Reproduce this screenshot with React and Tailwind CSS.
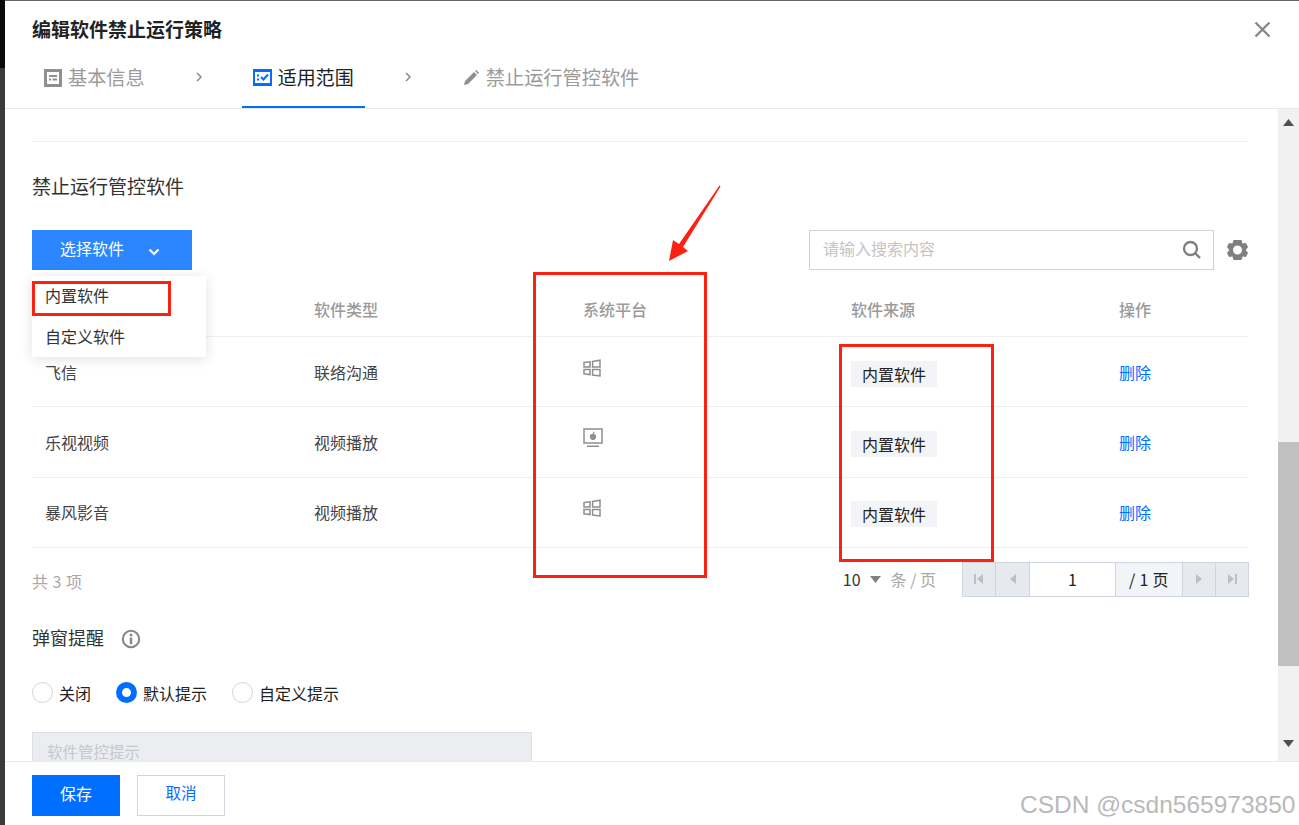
import React from 'react';

const rows = [
  { name: '飞信', type: '联络沟通', platform: 'win' },
  { name: '乐视视频', type: '视频播放', platform: 'mac' },
  { name: '暴风影音', type: '视频播放', platform: 'win' }
];

const WinIcon = () => (
  <svg width="18" height="18" viewBox="0 0 18 18" fill="none" stroke="#8f8f8f" strokeWidth="1.5">
    <path d="M1 3.6 7 2.800V8H1ZM1 10.600H7V15.600L1 14.800ZM9.600 2.400 17 1.200V8H9.600ZM9.600 10.600H17V17L9.600 16Z" />
  </svg>
);

const MacIcon = () => (
  <svg width="20" height="20" viewBox="0 0 20 20" fill="none">
    <rect x="1" y="1" width="18" height="14" stroke="#8f8f8f" strokeWidth="1.5" />
    <rect x="4" y="17.500" width="12" height="1.500" fill="#8f8f8f" />
    <path d="M6.800 8.500C6.800 6.300 8.900 5.700 10 6.300 11.100 5.700 13.200 6.300 13.200 8.500 13.200 10.800 11.300 12.500 10 12 8.700 12.500 6.800 10.800 6.800 8.500Z" fill="#8f8f8f" />
    <path d="M10 6 11.200 3.800" stroke="#8f8f8f" strokeWidth="1.200" />
  </svg>
);

const Tri = ({ d }) => (
  <svg width="10" height="12" viewBox="0 0 10 12" fill="#bcc0c6"><path d={d} /></svg>
);

const Chevron = () => (
  <svg width="8" height="10" viewBox="0 0 8 10" fill="none" stroke="#8f8f8f" strokeWidth="1.6">
    <path d="M2 1 6 5 2 9" />
  </svg>
);

const Radio = ({ label, on }) => (
  <div className="flex items-center gap-[6px]">
    {on ? (
      <span className="w-[21px] h-[21px] rounded-full border-[6px] border-[#006eff] bg-white" />
    ) : (
      <span className="w-[21px] h-[21px] rounded-full border border-[#d0d5dd] bg-white" />
    )}
    <span className="text-[16px] text-[#222]">{label}</span>
  </div>
);

const PageCell = ({ children, className }) => (
  <div className={`h-full flex items-center justify-center border-r border-[#cfd5de] ${className}`}>{children}</div>
);

export default function App() {
  return (
    <div
      className="relative w-[1299px] h-[825px] overflow-hidden flex bg-white"
      style={{ fontFamily: '"Noto Sans CJK SC", "Liberation Sans", sans-serif' }}
    >
      <div className="w-[5px] shrink-0 flex flex-col">
        <div className="h-[68px] bg-[#0a0a0a]" />
        <div className="flex-1 bg-[#3a3a3a]" />
      </div>

      <div className="flex-1 min-w-0 flex flex-col">
        <div className="h-[109px] shrink-0 border-t border-b border-t-[#666] border-b-[#e7eaef] flex flex-col">
          <div className="h-[54px] pl-[27px] pr-[28px] flex items-center justify-between">
            <span className="text-[19px] font-bold text-[#222] leading-none">编辑软件禁止运行策略</span>
            <svg className="mt-[2px]" width="17" height="17" viewBox="0 0 17 17" stroke="#888" strokeWidth="2.400">
              <path d="M1.500 1.500 15.500 15.500M15.500 1.500 1.500 15.500" />
            </svg>
          </div>
          <div className="flex-1 flex pl-[39px] items-stretch">
            <div className="flex items-center gap-[6px] h-full pb-[8px]">
              <svg width="18" height="18" viewBox="0 0 18 18">
                <path d="M0 0H18V18H0Z" fill="#8f8f8f" />
                <path d="M3 3H15V15H3Z" fill="#fff" />
                <path d="M5 6H13V8H5ZM5 9.500H7V11.500H5ZM8.500 9.500H13V11.500H8.500Z" fill="#8f8f8f" />
              </svg>
              <span className="text-[19.200px] text-[#9a9a9a]">基本信息</span>
            </div>
            <div className="ml-[50px] flex items-center pb-[10px]"><Chevron /></div>
            <div className="ml-[39px] px-[11px] h-full flex items-center gap-[6px] pb-[6px] border-b-[2px] border-[#006eff]">
              <svg width="19" height="17" viewBox="0 0 19 17">
                <path d="M0 0H19V17H0Z" fill="#006eff" />
                <path d="M2 3H17V14H2Z" fill="#fff" />
                <path d="M4 5.500H6V7.500H4ZM4 9.500H6V11.500H4Z" fill="#006eff" />
                <path d="M8 8 10.500 10.500 15 5.500" stroke="#006eff" strokeWidth="2" fill="none" />
              </svg>
              <span className="text-[19px] text-[#222]">适用范围</span>
            </div>
            <div className="ml-[39px] flex items-center pb-[10px]"><Chevron /></div>
            <div className="ml-[52px] flex items-center gap-[7px] h-full pb-[8px]">
              <svg width="15" height="15" viewBox="0 0 15 15" fill="#8f8f8f">
                <path d="M0 15 1 11 10 2 13 5 4 14ZM11 1 12.200 0 15 2.800 14 4Z" />
              </svg>
              <span className="text-[19.200px] text-[#9a9a9a]">禁止运行管控软件</span>
            </div>
          </div>
        </div>

        <div className="flex-1 min-h-0 flex">
          <div className="flex-1 min-w-0 overflow-hidden pl-[27px] pr-[30px]">
            <div className="mt-[32px] border-t border-[#eeeff2]" />
            <div className="mt-[31px] h-[30px] pb-[4px] flex items-center text-[19px] text-[#333]">禁止运行管控软件</div>

            <div className="mt-[27px] h-[40px] flex items-stretch justify-between">
              <div className="w-[160px] bg-[#2b86ff] flex items-center text-white text-[16px] pl-[28px]">
                <span className="mb-[4px]">选择软件</span>
                <svg className="ml-[24px] mt-[3px]" width="12" height="8" viewBox="0 0 12 8" fill="none" stroke="#fff" strokeWidth="2.200">
                  <path d="M1.500 1.500 6 6 10.500 1.500" />
                </svg>
              </div>
              <div className="flex items-center">
                <div className="w-[405px] h-[40px] border border-[#cfd2da] flex items-center justify-between pl-[13px] pr-[11px]">
                  <span className="text-[16px] text-[#c4c4c4] mb-[4px]">请输入搜索内容</span>
                  <svg width="20" height="20" viewBox="0 0 20 20" fill="none" stroke="#808080" strokeWidth="2.400">
                    <circle cx="8.500" cy="8.500" r="6.500" />
                    <path d="M13 13 18 18" />
                  </svg>
                </div>
                <svg className="ml-[13px]" width="21" height="22" viewBox="0 0 21 22">
                  <path
                    fillRule="evenodd"
                    fill="#808080"
                    d="M6.500 1H14.500L15.500 4.500 19 4 21 8 18.800 11 21 14 19 18 15.500 17.500 14.500 21H6.500L5.500 17.500 2 18 0 14 2.200 11 0 8 2 4 5.500 4.500ZM10.500 6.500A4.500 4.500 0 1 0 10.500 15.500 4.500 4.500 0 1 0 10.500 6.500Z"
                  />
                </svg>
              </div>
            </div>

            {/* first header cell sits behind the open dropdown, so it stays empty */}
            <div className="mt-[2px] grid grid-cols-[282px_269px_268px_268px_1fr] h-[65px] pt-[10px] border-b border-[#eeeff2] items-center text-[16px] font-medium text-[#9a9a9a]">
              <span />
              <span>软件类型</span>
              <span>系统平台</span>
              <span>软件来源</span>
              <span>操作</span>
            </div>

            {rows.map(row => (
              <div
                key={row.name}
                className="grid grid-cols-[282px_269px_268px_268px_1fr] h-[70.330px] border-b border-[#eeeff2] items-center text-[16px] text-[#444]"
              >
                <span className="pl-[13px]">{row.name}</span>
                <span>{row.type}</span>
                <span className="mb-[8px]">{row.platform === 'win' ? <WinIcon /> : <MacIcon />}</span>
                <span>
                  <span className="inline-flex items-center h-[26px] w-[86px] justify-center bg-[#f3f4f7] text-[16px] text-[#222] mt-[4px]">内置软件</span>
                </span>
                <span className="text-[#006eff] text-[16px]">删除</span>
              </div>
            ))}

            <div className="mt-[14px] h-[35px] flex items-center justify-between">
              <span className="text-[16px] text-[#a8a8a8] mt-[3px] tracking-[0.5px]">共 3 项</span>
              <div className="flex items-center h-full -mr-[1px]">
                <span className="text-[16px] text-[#333]">10</span>
                <svg className="ml-[9px]" width="11" height="7" viewBox="0 0 11 7" fill="#808080"><path d="M0 0H11L5.500 7Z" /></svg>
                <span className="ml-[10px] mr-[26px] text-[16px] text-[#a8a8a8]">条 / 页</span>
                <div className="h-full flex border border-[#cfd5de]">
                  <PageCell className="w-[33px] bg-[#e6e9ee]"><Tri d="M0 1H2V11H0ZM9 1V11L3 6Z" /></PageCell>
                  <PageCell className="w-[34px] bg-[#e6e9ee]"><Tri d="M8 1V11L2 6Z" /></PageCell>
                  <PageCell className="w-[86px] bg-white text-[16px] text-[#222]">1</PageCell>
                  <PageCell className="w-[67px] bg-[#f3f4f7] text-[16px] text-[#222] tracking-[0.3px]">/ 1 页</PageCell>
                  <PageCell className="w-[33px] bg-[#e6e9ee]"><Tri d="M2 1V11L8 6Z" /></PageCell>
                  <div className="flex-1 w-[32px] flex items-center justify-center bg-[#e6e9ee]"><Tri d="M1 1V11L7 6ZM8 1H10V11H8Z" /></div>
                </div>
              </div>
            </div>

            <div className="mt-[27px] h-[28px] flex items-center gap-[17px]">
              <span className="text-[18px] text-[#333] w-[72px]">弹窗提醒</span>
              <svg className="mt-[2px]" width="20" height="20" viewBox="0 0 19 19" fill="none">
                <circle cx="9.500" cy="9.500" r="7.800" stroke="#888" strokeWidth="2" />
                <path d="M8.300 4.500H10.700V6.800H8.300ZM8.300 8H10.700V14.500H8.300Z" fill="#888" />
              </svg>
            </div>

            <div className="mt-[27px] h-[28px] flex items-center gap-[25px]">
              <Radio label="关闭" />
              <Radio label="默认提示" on />
              <Radio label="自定义提示" />
            </div>

            <div className="mt-[25px] w-[500px] h-[60px] bg-[#ebedf0] border border-[#dcdfe6] px-[14px] pt-[7px] text-[15.500px] text-[#c6c8cc]">
              软件管控提示
            </div>
          </div>

          <div className="w-[21px] shrink-0 bg-[#f1f1f1] flex flex-col items-center">
            <svg className="mt-[10px]" width="11" height="7" viewBox="0 0 11 7" fill="#505050"><path d="M5.500 0 11 7H0Z" /></svg>
            <div className="mt-[316px] w-full h-[224px] bg-[#c1c1c1]" />
            <svg className="mt-[74px]" width="11" height="7" viewBox="0 0 11 7" fill="#505050"><path d="M0 0H11L5.500 7Z" /></svg>
          </div>
        </div>

        <div className="h-[64px] shrink-0 border-t border-[#e7eaef] pl-[27px] pt-[13px] flex gap-[17px] items-start bg-white">
          <div className="w-[88px] h-[41px] pb-[5px] bg-[#006eff] text-white text-[16px] flex items-center justify-center">保存</div>
          <div className="w-[88px] h-[41px] pb-[5px] border border-[#d0d5dd] text-[#006eff] text-[15.500px] flex items-center justify-center">取消</div>
        </div>
      </div>

      {/* dropdown over the table */}
      <div className="absolute left-[32px] top-[276px] w-[174px] h-[81px] bg-white shadow-[0_2px_12px_rgba(0,0,0,0.12)] flex flex-col text-[16px] text-[#333] pl-[13px]">
        <span className="h-[40px] pb-[2px] flex items-center">内置软件</span>
        <span className="h-[41px] pb-[2px] flex items-center">自定义软件</span>
      </div>

      {/* red annotations */}
      <div className="absolute left-[32px] top-[281px] w-[139px] h-[35px] border-[3px] border-[#fb2113]" />
      <div className="absolute left-[533px] top-[272px] w-[174px] h-[306px] border-[3px] border-[#fb2113]" />
      <div className="absolute left-[839px] top-[344px] w-[155px] h-[218px] border-[3px] border-[#fb2113]" />
      <svg className="absolute left-[660px] top-[180px]" width="70" height="90" viewBox="0 0 70 90" fill="#fb2113">
        <path d="M59.500 5.500 60.500 6.500 23 67 28 71 9 81 13 60 19 64Z" />
      </svg>

      <span className="absolute left-[1020px] top-[787px] text-[24.500px] text-[#a8a8a8] opacity-80 whitespace-nowrap" style={{ fontFamily: '"Liberation Sans", sans-serif' }}>
        CSDN @csdn565973850
      </span>
    </div>
  );
}
